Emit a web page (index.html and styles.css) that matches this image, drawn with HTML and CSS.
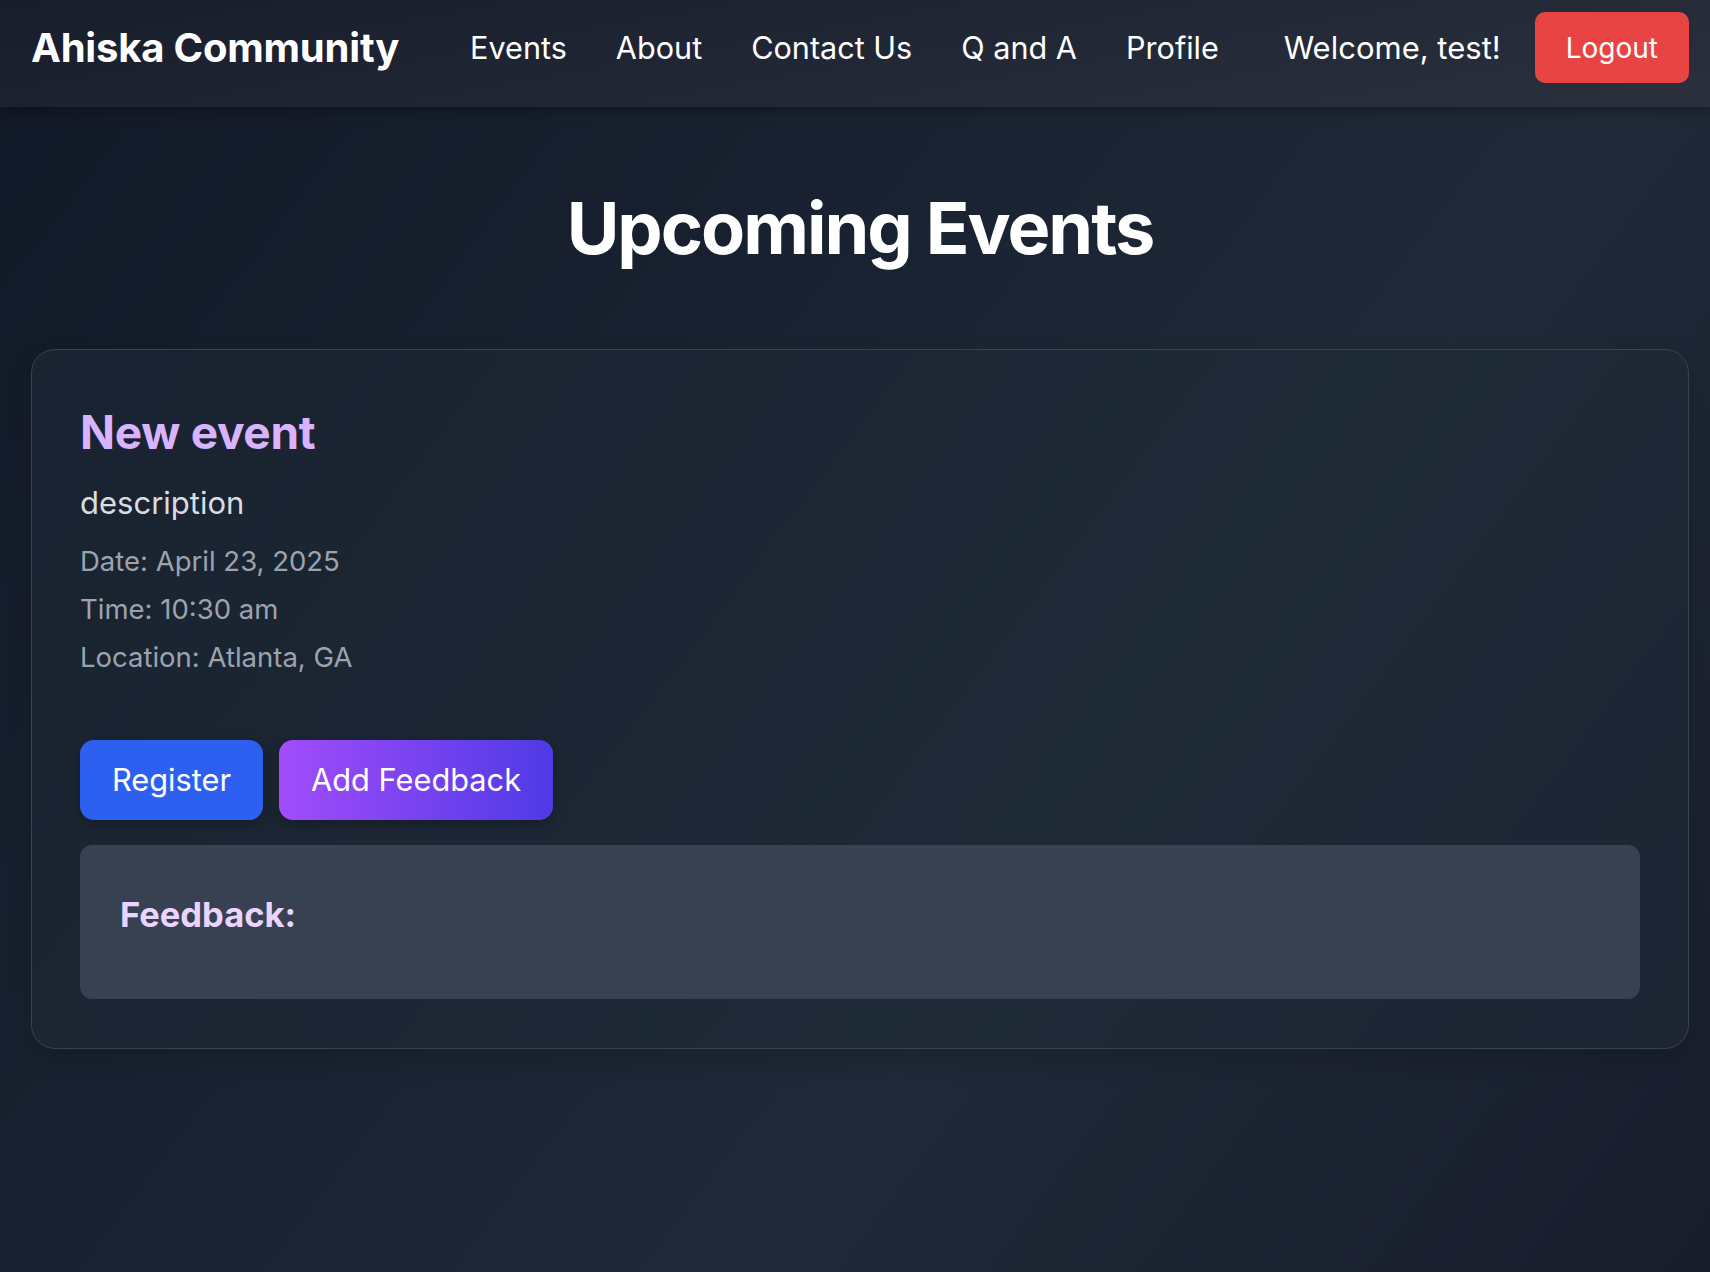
FILE: index.html
```html
<!DOCTYPE html>
<html lang="en">
<head>
<meta charset="utf-8">
<title>Ahiska Community - Events</title>
<link rel="stylesheet" href="styles.css">
</head>
<body>
<nav class="navbar">
  <a class="brand" href="#">Ahiska Community</a>
  <ul class="nav-links">
    <li><a href="#">Events</a></li>
    <li><a href="#">About</a></li>
    <li><a href="#">Contact Us</a></li>
    <li><a href="#">Q and A</a></li>
    <li><a href="#">Profile</a></li>
  </ul>
  <div class="nav-user">
    <span class="welcome">Welcome, test!</span>
    <button class="btn-logout">Logout</button>
  </div>
</nav>
<main class="main">
  <h1 class="page-title">Upcoming Events</h1>
  <section class="event-card">
    <h2 class="event-title">New event</h2>
    <p class="event-desc">description</p>
    <div class="event-meta">
      <p>Date: April 23, 2025</p>
      <p>Time: 10:30 am</p>
      <p>Location: Atlanta, GA</p>
    </div>
    <div class="event-actions">
      <button class="btn btn-register">Register</button>
      <button class="btn btn-feedback">Add Feedback</button>
    </div>
    <div class="feedback-box">
      <h3 class="feedback-title">Feedback:</h3>
    </div>
  </section>
</main>
</body>
</html>
```
FILE: styles.css
```css
* { box-sizing: border-box; }
html, body { margin: 0; padding: 0; }
body {
  font-family: Inter, "Noto Sans", "Liberation Sans", sans-serif;
  color: #fff;
  min-height: 1272px;
  background: linear-gradient(127deg, #111827 0%, #1f2937 64%, #181d2c 100%);
}
.navbar {
  display: flex;
  align-items: center;
  height: 107px;
  padding: 12px 21px 24px 31px;
  background: linear-gradient(170deg, #181d2b 0%, #2a303e 100%);
  box-shadow: 0 4px 10px rgba(0,0,0,0.25);
}
.brand {
  font-size: 40px;
  font-weight: 700;
  color: #fff;
  text-decoration: none;
  letter-spacing: -0.2px;
}
.nav-links {
  display: flex;
  gap: 49px;
  list-style: none;
  margin: 0 0 0 71px;
  padding: 0;
}
.nav-links a {
  color: #fff;
  text-decoration: none;
  font-size: 30.6px;
}
.nav-user {
  margin-left: auto;
  display: flex;
  align-items: center;
  gap: 34px;
}
.welcome { font-size: 31px; }
.btn-logout {
  font-family: inherit;
  font-size: 28px;
  color: #fff;
  background: #e84444;
  border: none;
  border-radius: 10px;
  height: 71px;
  padding: 0 31px;
}
.main {
  padding: 78px 21px 0 31px;
}
.page-title {
  margin: 0 0 78px;
  text-align: center;
  font-size: 72px;
  font-weight: 700;
  line-height: 1.2;
  letter-spacing: -2px;
}
.event-card {
  border: 1px solid #3a4252;
  border-radius: 24px;
  background: rgba(31, 41, 55, 0.55);
  padding: 48px 48px 49px;
  box-shadow: 0 10px 25px rgba(0,0,0,0.15);
}
.event-title {
  margin: 0 0 13px;
  font-size: 46px;
  font-weight: 700;
  line-height: 1.5;
  color: #d8b4fe;
  letter-spacing: -0.3px;
}
.event-desc {
  margin: 0 0 14px;
  font-size: 31px;
  line-height: 1.5;
  color: #d9dce1;
}
.event-meta {
  display: flex;
  flex-direction: column;
  gap: 7px;
}
.event-meta p {
  margin: 0;
  font-size: 27.5px;
  line-height: 41px;
  color: #9ca3af;
}
.event-actions {
  display: flex;
  gap: 16px;
  margin-top: 62px;
}
.btn {
  font-family: inherit;
  font-size: 30.75px;
  font-weight: 400;
  line-height: 1.5;
  color: #fff;
  border: none;
  border-radius: 14px;
  height: 80px;
  padding: 0 32px;
  box-shadow: 0 4px 12px rgba(0,0,0,0.25);
}
.btn-register { background: #2d60f0; }
.btn-feedback { background: linear-gradient(90deg, #a24cfb 0%, #4f3ae6 100%); }
.feedback-box {
  margin-top: 25px;
  background: #374151;
  border-radius: 12px;
  padding: 44px 40px 44px;
}
.feedback-title {
  margin: 0 0 14px;
  font-size: 34.5px;
  font-weight: 700;
  line-height: 1.5;
  color: #e9d5ff;
}
```
